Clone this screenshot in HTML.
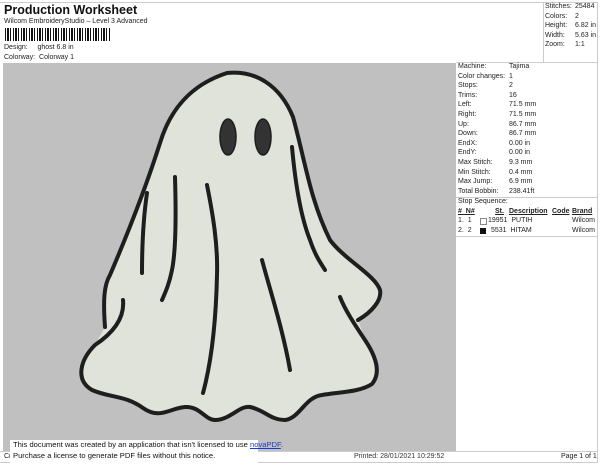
<!DOCTYPE html>
<html><head><style>
body{margin:0;width:600px;height:464px;background:#fff;position:relative;overflow:hidden;font-family:"Liberation Sans",sans-serif;color:#222}
.a{position:absolute;white-space:nowrap}
.s{font-size:7px}
.r td{padding:0;height:9.6px;font-size:7px;line-height:9.6px}
</style></head><body>
<div class="a" style="left:0;top:2px;width:598px;height:1px;background:#ccc"></div>
<div class="a" style="left:4px;top:3px;font-size:12.5px;font-weight:bold;color:#111">Production Worksheet</div>
<div class="a s" style="left:4px;top:18px">Wilcom EmbroideryStudio – Level 3 Advanced</div>
<div class="a" style="left:5px;top:28px;width:105px;height:13px;background:repeating-linear-gradient(90deg,#111 0 1px,#fff 1px 2px,#111 2px 4px,#fff 4px 5px,#111 5px 6px,#fff 6px 8px)"></div>
<div class="a s" style="left:4px;top:44px">Design:&nbsp;&nbsp;&nbsp;&nbsp;&nbsp;ghost 6.8 in</div>
<div class="a s" style="left:4px;top:54px">Colorway:&nbsp;&nbsp;Colorway 1</div>
<div class="a" style="left:543px;top:2px;width:1px;height:61px;background:#ccc"></div>
<div class="a" style="left:597px;top:2px;width:1px;height:461px;background:#ccc"></div>
<table class="a r" style="left:545px;top:2px;border-collapse:collapse"><tr><td style="width:30px">Stitches:</td><td>25484</td></tr><tr><td>Colors:</td><td>2</td></tr><tr><td>Height:</td><td>6.82 in</td></tr><tr><td>Width:</td><td>5.63 in</td></tr><tr><td>Zoom:</td><td>1:1</td></tr></table>
<div class="a" style="left:3px;top:63px;width:453px;height:388px;background:#c0c0c0"></div>
<div class="a" style="left:456px;top:62px;width:142px;height:1px;background:#ccc"></div>
<table class="a r" style="left:458px;top:62px;border-collapse:collapse">
<tr><td style="width:51px">Machine:</td><td>Tajima</td></tr><tr><td>Color changes:</td><td>1</td></tr><tr><td>Stops:</td><td>2</td></tr><tr><td>Trims:</td><td>16</td></tr><tr><td>Left:</td><td>71.5 mm</td></tr><tr><td>Right:</td><td>71.5 mm</td></tr><tr><td>Up:</td><td>86.7 mm</td></tr><tr><td>Down:</td><td>86.7 mm</td></tr><tr><td>EndX:</td><td>0.00 in</td></tr><tr><td>EndY:</td><td>0.00 in</td></tr><tr><td>Max Stitch:</td><td>9.3 mm</td></tr><tr><td>Min Stitch:</td><td>0.4 mm</td></tr><tr><td>Max Jump:</td><td>6.9 mm</td></tr><tr><td>Total Bobbin:</td><td>238.41ft</td></tr></table>
<div class="a" style="left:456px;top:197px;width:142px;height:1px;background:#ccc"></div>
<div class="a s" style="left:458px;top:198px">Stop Sequence:</div>
<div class="a s" style="left:458px;top:208px;font-weight:bold;text-decoration:underline">#&nbsp;&nbsp;N#</div>
<div class="a s" style="left:495px;top:208px;font-weight:bold;text-decoration:underline">St.</div>
<div class="a s" style="left:509px;top:208px;font-weight:bold;text-decoration:underline">Description</div>
<div class="a s" style="left:552px;top:208px;font-weight:bold;text-decoration:underline">Code</div>
<div class="a s" style="left:572px;top:208px;font-weight:bold;text-decoration:underline">Brand</div>
<div class="a s" style="left:458px;top:217px">1.&nbsp;&nbsp;1</div><div class="a" style="left:480px;top:218px;width:5px;height:5px;border:1px solid #888"></div><div class="a s" style="left:488px;top:217px">19951&nbsp;&nbsp;PUTIH</div><div class="a s" style="left:572px;top:217px">Wilcom</div>
<div class="a s" style="left:458px;top:227px">2.&nbsp;&nbsp;2</div><div class="a" style="left:480px;top:228px;width:6px;height:6px;background:#111"></div><div class="a s" style="left:491px;top:227px">5531&nbsp;&nbsp;HITAM</div><div class="a s" style="left:572px;top:227px">Wilcom</div>
<div class="a" style="left:456px;top:236px;width:142px;height:1px;background:#ccc"></div>
<svg class="a" style="left:0;top:0" width="600" height="464" viewBox="0 0 600 464">
<path fill="#dfe3da" d="M105,327 C103,300 104,285 110,275 C125,240 145,190 160,143 C170,110 190,85 227,73 C255,70 280,85 293,117 C305,160 310,200 330,240 C345,260 375,275 380,290 C382,300 372,312 358,320 L366,342 C375,355 382,372 372,384 C360,392 340,392 322,395 C305,397 300,418 285,420 C270,420 265,410 250,407 C240,405 230,420 215,420 C205,420 200,406 185,407 C170,408 160,420 143,408 C125,395 110,398 92,390 C75,380 80,360 95,345 Z"/>
<g stroke="#1e1e1e" stroke-width="4" fill="none" stroke-linecap="round">
<path d="M105,327 C103,300 104,285 110,275 C125,240 145,190 160,143 C170,110 190,85 227,73 C255,70 280,85 293,117 C305,160 310,200 330,240 C345,260 375,275 380,290 C382,300 372,312 358,320"/>
<path d="M123,300 C125,320 110,335 95,345 C80,360 75,380 92,390 C110,398 125,395 143,408 C160,420 170,408 185,407 C200,406 205,420 215,420 C230,420 240,405 250,407 C265,410 270,420 285,420 C300,418 305,397 322,395 C340,392 360,392 372,384 C382,372 375,355 365,340 C355,325 345,310 340,297"/>
<path d="M292,147 C295,180 300,215 310,240 C315,255 320,262 325,270"/>
<path d="M175,177 C176,210 176,250 172,270 C169,285 165,293 162,300"/>
<path d="M207,185 C213,215 218,245 217,275 C216,320 212,360 203,393"/>
<path d="M262,260 C270,290 283,330 290,370"/>
<path d="M147,193 C143,220 142,250 142,273"/>
</g>
<ellipse cx="228" cy="137" rx="8" ry="18" fill="#333" stroke="#1e1e1e" stroke-width="1.5"/>
<ellipse cx="263" cy="137" rx="8" ry="18" fill="#333" stroke="#1e1e1e" stroke-width="1.5"/>
</svg>
<div class="a" style="left:0;top:451px;width:598px;height:1px;background:#ccc"></div>
<div class="a" style="left:0;top:462px;width:598px;height:1px;background:#ccc"></div>
<div class="a s" style="left:4px;top:453px">Cr</div>
<div class="a s" style="left:354px;top:453px;color:#333">Printed: 28/01/2021 10:29:52</div>
<div class="a s" style="left:561px;top:453px">Page 1 of 1</div>
<div class="a" style="left:10px;top:440px;width:248px;height:24px;background:#fff"></div>
<div class="a" style="left:13px;top:440px;font-size:7.6px;line-height:10.5px;color:#111">This document was created by an application that isn't licensed to use <span style="color:#1a3ccc;text-decoration:underline">novaPDF</span>.<br>Purchase a license to generate PDF files without this notice.</div>
</body></html>
